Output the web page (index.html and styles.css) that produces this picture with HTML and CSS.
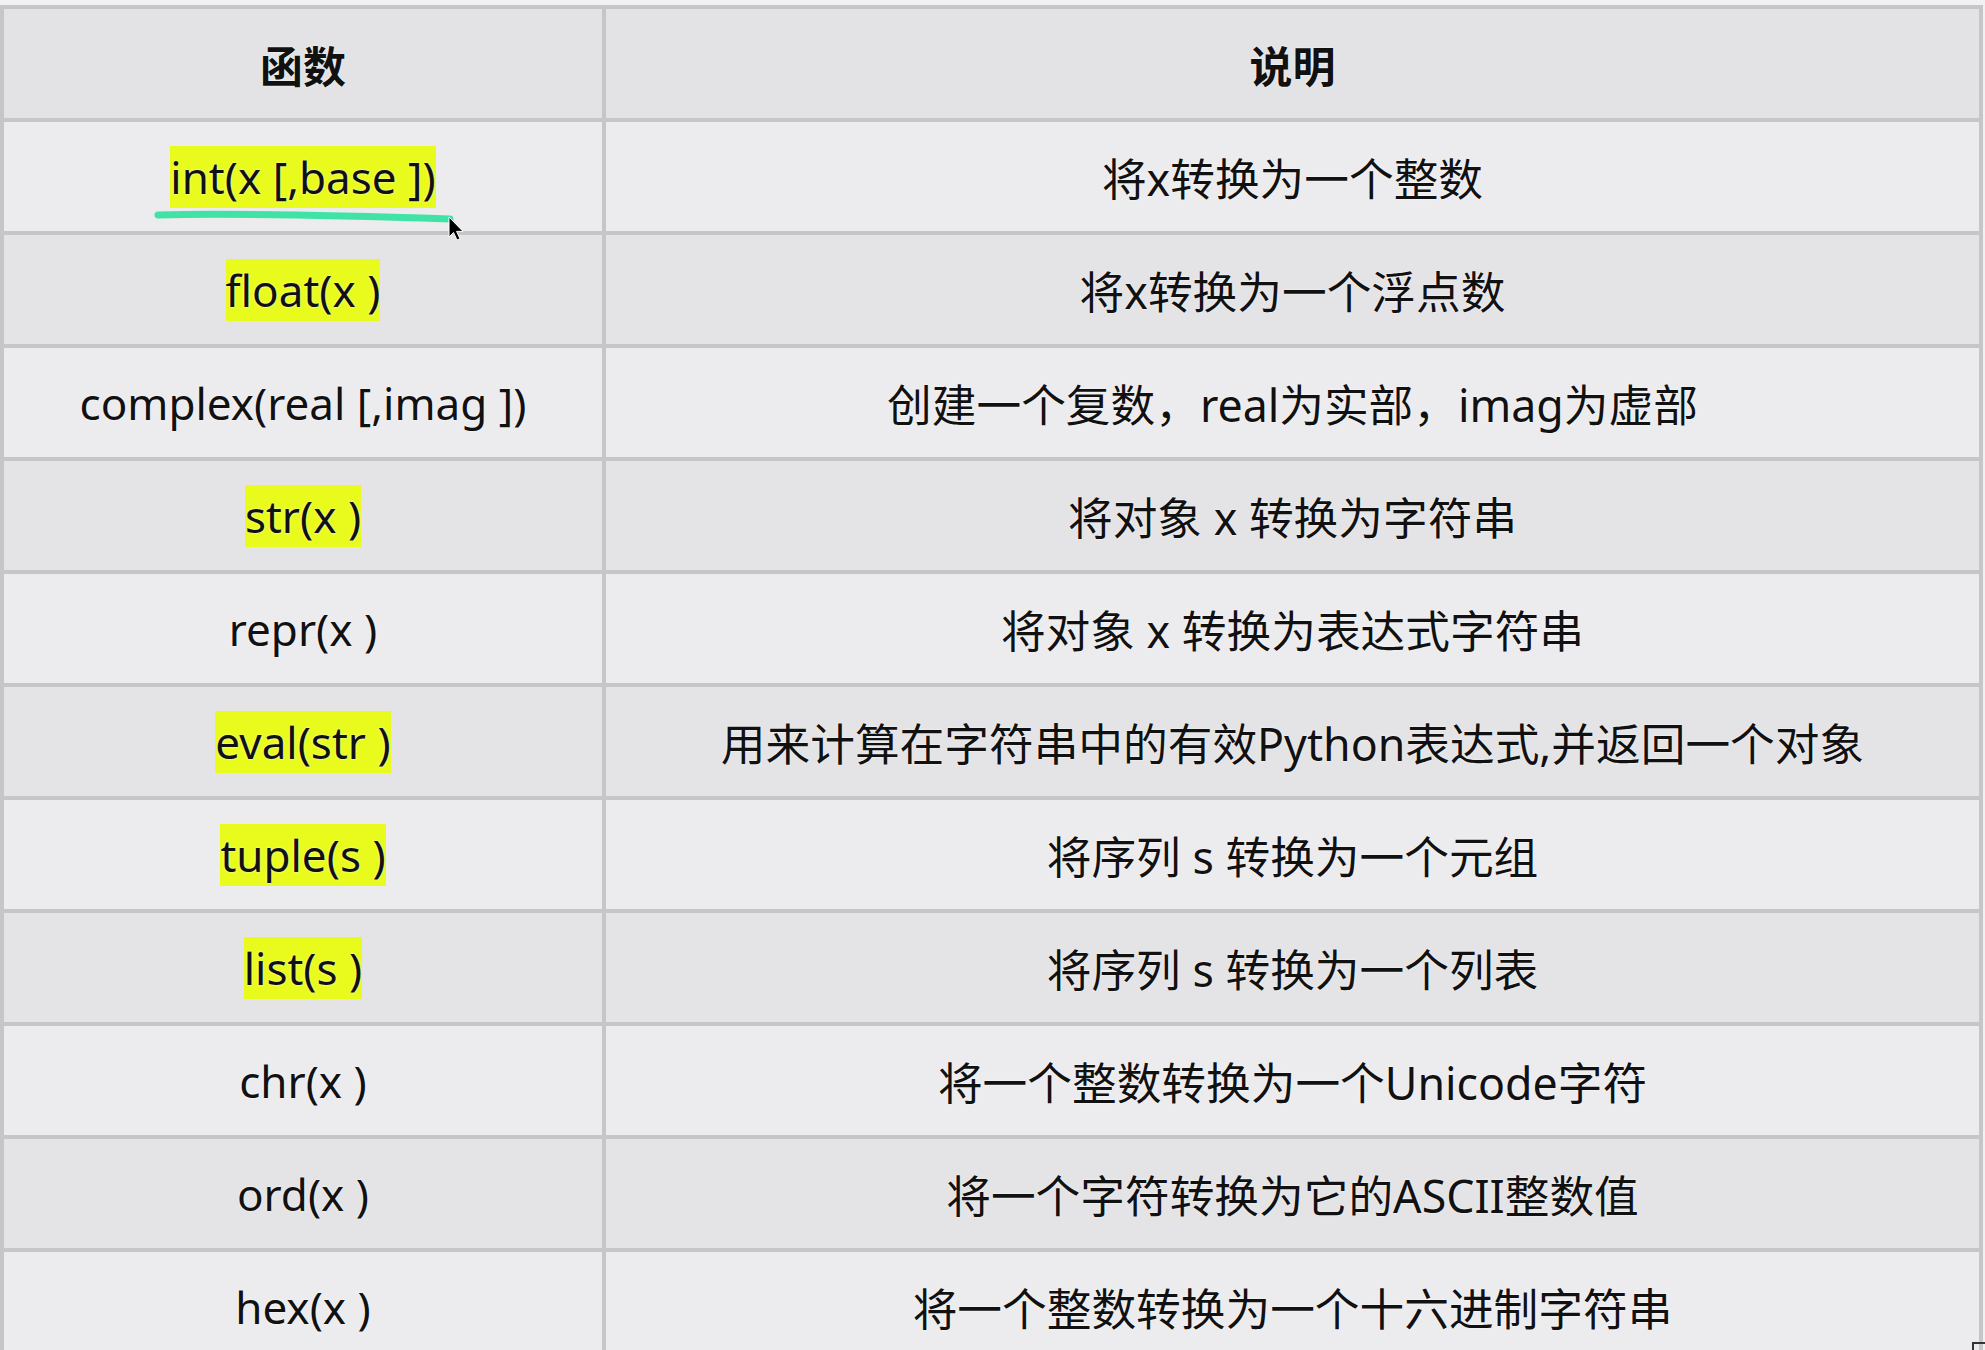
FILE: index.html
```html
<!DOCTYPE html>
<html lang="zh-CN">
<head>
<meta charset="utf-8">
<title>函数</title>
<link rel="stylesheet" href="styles.css">
</head>
<body>
<div class="table">
  <div class="cell head">函数</div>
  <div class="cell head">说明</div>

  <div class="cell light fn annotated">
    <span class="hl">int(x [,base ])</span>
    <svg class="mark" width="320" height="40" viewBox="0 0 320 40">
      <path d="M4 8 C 80 6, 200 9, 296 12" stroke="#3fe3a6" stroke-width="7" stroke-linecap="round" fill="none"/>
      <path d="M295 10 L295 30 L299.5 25.5 L303 33 L306 31.8 L302.6 24.4 L309 24.4 Z" fill="#000" stroke="#fff" stroke-width="1"/>
    </svg>
  </div>
  <div class="cell light desc">将x转换为一个整数</div>

  <div class="cell dark fn"><span class="hl">float(x )</span></div>
  <div class="cell dark desc">将x转换为一个浮点数</div>

  <div class="cell light fn">complex(real [,imag ])</div>
  <div class="cell light desc">创建一个复数，real为实部，imag为虚部</div>

  <div class="cell dark fn"><span class="hl">str(x )</span></div>
  <div class="cell dark desc">将对象 x 转换为字符串</div>

  <div class="cell light fn">repr(x )</div>
  <div class="cell light desc">将对象 x 转换为表达式字符串</div>

  <div class="cell dark fn"><span class="hl">eval(str )</span></div>
  <div class="cell dark desc">用来计算在字符串中的有效Python表达式,并返回一个对象</div>

  <div class="cell light fn"><span class="hl">tuple(s )</span></div>
  <div class="cell light desc">将序列 s 转换为一个元组</div>

  <div class="cell dark fn"><span class="hl">list(s )</span></div>
  <div class="cell dark desc">将序列 s 转换为一个列表</div>

  <div class="cell light fn">chr(x )</div>
  <div class="cell light desc">将一个整数转换为一个Unicode字符</div>

  <div class="cell dark fn">ord(x )</div>
  <div class="cell dark desc">将一个字符转换为它的ASCII整数值</div>

  <div class="cell light fn">hex(x )</div>
  <div class="cell light desc">将一个整数转换为一个十六进制字符串</div>
</div>
<div class="corner"></div>
</body>
</html>
```

FILE: styles.css
```css
html, body {
  margin: 0;
  padding: 0;
  overflow: hidden;
  height: 100%;
}

body {
  background: #f1f1f2;
  font-family: "Noto Sans", "Noto Sans CJK SC", sans-serif;
  color: #111111;
}

.table {
  margin-top: 5px;
  width: 1983px;
  box-sizing: border-box;
  display: grid;
  grid-template-columns: 598px 1fr;
  grid-auto-rows: 109px;
  gap: 4px;
  padding: 4px;
  background: #c6c6c8;
}

.cell {
  display: flex;
  align-items: center;
  justify-content: center;
  font-size: 44px;
  white-space: nowrap;
  text-shadow: 0 0 2px #ffffff;
}

.desc {
  font-size: 44.7px;
}

.head {
  background: #e3e2e5;
  font-weight: 700;
  font-size: 43px;
  font-family: "Noto Sans CJK SC", sans-serif;
}

.light {
  background: #ecebee;
}

.dark {
  background: #e4e3e6;
}

.hl {
  background: #e9fb1d;
  padding: 1px 0;
}

.annotated {
  position: relative;
}

.mark {
  position: absolute;
  left: 150px;
  top: 85px;
  overflow: visible;
}

.corner {
  position: fixed;
  left: 1972px;
  top: 1342px;
  width: 13px;
  height: 8px;
  border-top: 2px solid #333;
  border-left: 2px solid #333;
}
```
